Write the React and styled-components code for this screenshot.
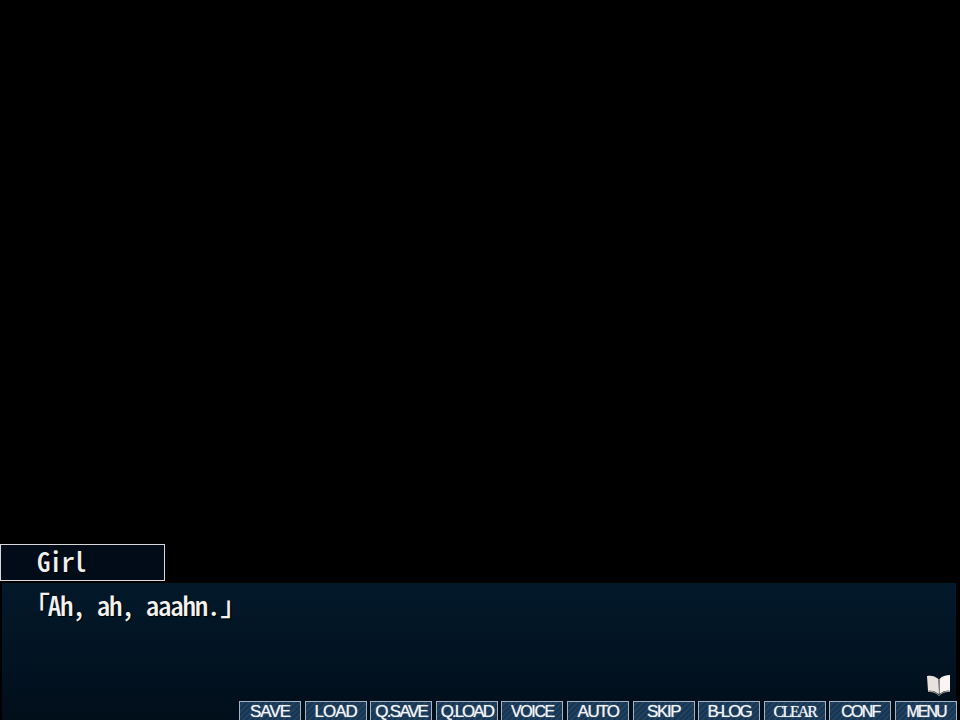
import React from "react";
import styled, { createGlobalStyle } from "styled-components";

const Global = createGlobalStyle`
  html, body { margin: 0; padding: 0; background: #000; }
`;

const Screen = styled.div`
  width: 960px;
  height: 720px;
  background: #000;
  display: flex;
  flex-direction: column;
  justify-content: flex-end;
  overflow: hidden;
`;

const NameBox = styled.div`
  box-sizing: border-box;
  width: 165px;
  height: 37px;
  margin-bottom: 2px;
  padding-left: 36px;
  border: 1px solid #d8d8d8;
  background: #020c18;
  color: #f0f0f0;
  font: 500 27px/32px "Noto Sans CJK JP", "Liberation Mono", monospace;
  font-feature-settings: "hwid";
  letter-spacing: -1.4px;
  text-shadow: 1px 1px 1px #000;
`;

const Panel = styled.div`
  position: relative;
  box-sizing: border-box;
  height: 137px;
  margin: 0 4px 0 2px;
  display: flex;
  flex-direction: column;
  justify-content: space-between;
  background: linear-gradient(180deg, #02192a 0%, #021423 45%, #010e1a 100%);
`;

const Line = styled.div`
  padding: 4px 0 0 21px;
  color: #f2f2f2;
  font: 500 27px/36px "Noto Sans CJK JP", "Liberation Mono", monospace;
  font-feature-settings: "hwid";
  letter-spacing: -1.25px;
  text-shadow: 1px 1px 1px #000;
`;

const OpenMark = styled.span`
  margin-right: -1px;
`;

const CloseMark = styled.span`
  margin-left: 1px;
`;

const Book = styled.svg`
  position: absolute;
  right: 4px;
  bottom: 23px;
`;

const Toolbar = styled.div`
  display: flex;
  justify-content: flex-end;
  gap: 3.6px;
  margin-right: -1px;
  height: 19px;
`;

const Btn = styled.div`
  box-sizing: border-box;
  flex: 0 0 62px;
  height: 19px;
  border: 1px solid #a3b3c1;
  border-bottom: 0;
  background: repeating-linear-gradient(135deg, #183653 0 2px, #20425f 2px 4px);
  color: #f0f4f8;
  text-align: center;
  font-family: ${(p) => (p.$serif ? '"Liberation Serif", serif' : '"Liberation Sans", sans-serif')};
  font-size: ${(p) => p.$size || 17}px;
  line-height: 20px;
  letter-spacing: ${(p) => p.$tight ?? -1}px;
  text-shadow: 0 0 1px rgba(255, 255, 255, 0.7);
  white-space: nowrap;
`;

const items = [
  { t: "SAVE" },
  { t: "LOAD" },
  { t: "Q.SAVE", tight: -1.7 },
  { t: "Q.LOAD", tight: -2 },
  { t: "VOICE", size: 16, tight: -1.4 },
  { t: "AUTO", tight: -1.5 },
  { t: "SKIP", tight: -1.4 },
  { t: "B-LOG", tight: -1.9 },
  { t: "CLEAR", serif: true, size: 16, tight: -2 },
  { t: "CONF", size: 16, tight: -1.7 },
  { t: "MENU", size: 16, tight: -2 },
];

export default function App() {
  return (
    <Screen>
      <Global />
      <NameBox>Girl</NameBox>
      <Panel>
        <Line><OpenMark>「</OpenMark>Ah, ah, aaahn.<CloseMark>」</CloseMark></Line>
        <Book width="26" height="24" viewBox="0 0 26 24">
          <path d="M1 3 C5 2 9 3 12.5 6 L13 21 C9 18 5 17 2 18 Z" fill="#e8e2de" />
          <path d="M13.5 6 C16 3 20 2 24 2 L24 18 C20 17 17 18 13.5 21 Z" fill="#faf5f2" />
          <path d="M2 18 C6 17 10 19 13 22 C16 19 20 17 24 18 L24 19 C20 18.5 16 20 13 23 C10 20 6 18.5 2 19 Z" fill="#9a9694" />
        </Book>
        <Toolbar>
          {items.map((i) => (
            <Btn key={i.t} $serif={i.serif} $tight={i.tight} $size={i.size}>{i.t}</Btn>
          ))}
        </Toolbar>
      </Panel>
    </Screen>
  );
}
